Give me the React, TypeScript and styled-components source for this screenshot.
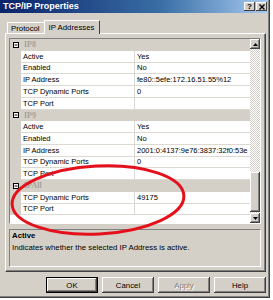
import styled, { createGlobalStyle } from "styled-components";

const GlobalStyle = createGlobalStyle`
  html, body {
    margin: 0;
    padding: 0;
    background: #ffffff;
  }
  body {
    font-family: "Liberation Sans", Arial, sans-serif;
    font-size: 7.5px;
    color: #000;
  }
`;

type Prop = { name: string; value?: string };
type Group = { title: string; props: Prop[] };

const groups: Group[] = [
  {
    title: "IP8",
    props: [
      { name: "Active", value: "Yes" },
      { name: "Enabled", value: "No" },
      { name: "IP Address", value: "fe80::5efe:172.16.51.55%12" },
      { name: "TCP Dynamic Ports", value: "0" },
      { name: "TCP Port", value: "" },
    ],
  },
  {
    title: "IP9",
    props: [
      { name: "Active", value: "Yes" },
      { name: "Enabled", value: "No" },
      { name: "IP Address", value: "2001:0:4137:9e76:3837:32f0:53e" },
      { name: "TCP Dynamic Ports", value: "0" },
      { name: "TCP Port", value: "" },
    ],
  },
  {
    title: "IPAll",
    props: [
      { name: "TCP Dynamic Ports", value: "49175" },
      { name: "TCP Port", value: "" },
    ],
  },
];

const App: React.FC = () => {
  return (
    <>
      <GlobalStyle />
      <Window>
        <TitleBar>
          <Title>TCP/IP Properties</Title>
          <CaptionButtons>
            <CaptionButton>?</CaptionButton>
            <CaptionButton>
              <svg width="6" height="6" viewBox="0 0 6 6">
                <path d="M0.5 0.5 L5.5 5.5 M5.5 0.5 L0.5 5.5" stroke="#000" strokeWidth="1.4" />
              </svg>
            </CaptionButton>
          </CaptionButtons>
        </TitleBar>

        <Body>
          <Tabs>
            <Tab>Protocol</Tab>
            <Tab $active>IP Addresses</Tab>
          </Tabs>
          <TabPanel>
            <Grid>
              <GridContent>
                {groups.map((g) => (
                  <div key={g.title}>
                    <GroupRow>
                      <Expander>
                        <svg width="6" height="6" viewBox="0 0 6 6">
                          <rect x="0.5" y="0.5" width="5" height="5" fill="#fff" stroke="#000" strokeWidth="1" />
                          <path d="M1.5 3 H4.5" stroke="#000" strokeWidth="1" />
                        </svg>
                      </Expander>
                      <GroupTitle>{g.title}</GroupTitle>
                    </GroupRow>
                    {g.props.map((p) => (
                      <PropRow key={p.name}>
                        <Gutter />
                        <NameCell>{p.name}</NameCell>
                        <ValueCell>{p.value}</ValueCell>
                      </PropRow>
                    ))}
                  </div>
                ))}
                <Filler />
              </GridContent>
              <ScrollBar>
                <ScrollButton>
                  <svg width="5" height="3" viewBox="0 0 5 3">
                    <path d="M2.5 0 L5 3 L0 3 Z" fill="#000" />
                  </svg>
                </ScrollButton>
                <Track>
                  <Thumb />
                </Track>
                <ScrollButton>
                  <svg width="5" height="3" viewBox="0 0 5 3">
                    <path d="M0 0 L5 0 L2.5 3 Z" fill="#000" />
                  </svg>
                </ScrollButton>
              </ScrollBar>
            </Grid>
            <Description>
              <DescTitle>Active</DescTitle>
              <DescText>Indicates whether the selected IP Address is active.</DescText>
            </Description>
          </TabPanel>
          <ButtonRow>
            <DialogButton $default>OK</DialogButton>
            <DialogButton>Cancel</DialogButton>
            <DialogButton disabled>Apply</DialogButton>
            <DialogButton>Help</DialogButton>
          </ButtonRow>
        </Body>

        <Annotation width="273" height="300" viewBox="0 0 273 300">
          <ellipse
            cx="98"
            cy="200"
            rx="86"
            ry="34"
            fill="none"
            stroke="#e4111c"
            strokeWidth="3"
            transform="rotate(-3 98 200)"
          />
        </Annotation>
      </Window>
    </>
  );
};

const Window = styled.div`
  position: relative;
  width: 270px;
  height: 298px;
  box-sizing: border-box;
  background: #d4d0c8;
  border-right: 1px solid #404040;
  border-bottom: 1px solid #404040;
  box-shadow: inset -1px -1px 0 #808080;
  display: flex;
  flex-direction: column;
`;

const TitleBar = styled.div`
  height: 13px;
  margin-right: 1px;
  display: flex;
  align-items: center;
  justify-content: space-between;
  background: linear-gradient(to right, #0a246a 0%, #3a6ea5 60%, #a6caf0 100%);
`;

const Title = styled.div`
  color: #fff;
  font-weight: 700;
  font-size: 9px;
  padding-left: 3px;
  line-height: 13px;
`;

const CaptionButtons = styled.div`
  display: flex;
  gap: 1px;
  padding-right: 1px;
`;

const CaptionButton = styled.div`
  width: 11px;
  height: 9px;
  box-sizing: border-box;
  background: #d4d0c8;
  box-shadow: inset -1px -1px #404040, inset 1px 1px #fff;
  display: flex;
  align-items: center;
  justify-content: center;
  font-weight: 700;
  font-size: 8px;
  line-height: 9px;
`;

const Body = styled.div`
  flex: 1;
  display: flex;
  flex-direction: column;
  padding: 7px 3px 0 5px;
`;

const Tabs = styled.div`
  display: flex;
  align-items: flex-end;
  height: 13px;
  padding-left: 2px;
  position: relative;
  z-index: 1;
`;

const Tab = styled.div<{ $active?: boolean }>`
  box-sizing: border-box;
  height: ${(p) => (p.$active ? "14px" : "11px")};
  margin-bottom: ${(p) => (p.$active ? "-1px" : "0")};
  margin-left: ${(p) => (p.$active ? "-1px" : "0")};
  padding: ${(p) => (p.$active ? "2px 5px 0 4px" : "1px 4px 0 3px")};
  background: #d4d0c8;
  border-top: 1px solid #fff;
  border-left: 1px solid #fff;
  border-right: 1px solid #404040;
  border-radius: 1px 1px 0 0;
  font-size: 7.8px;
  line-height: 9px;
  white-space: nowrap;
`;

const TabPanel = styled.div`
  height: 239px;
  box-sizing: border-box;
  border-top: 1px solid #fff;
  border-left: 1px solid #fff;
  border-right: 1px solid #404040;
  border-bottom: 1px solid #404040;
  box-shadow: inset -1px -1px #808080;
  padding: 4px 4px 4px 3px;
  display: flex;
  flex-direction: column;
  gap: 5px;
`;

const Grid = styled.div`
  height: 188px;
  box-sizing: border-box;
  border: 1px solid;
  border-color: #808080 #fff #fff #808080;
  display: flex;
  background: #fff;
`;

const GridContent = styled.div`
  flex: 1;
  display: flex;
  flex-direction: column;
  overflow: hidden;
`;

const GroupRow = styled.div`
  height: 11.75px;
  display: flex;
  align-items: center;
  background: #d4d0c8;
`;

const Expander = styled.div`
  width: 11px;
  display: flex;
  align-items: center;
  justify-content: center;
  padding-left: 1px;
  box-sizing: border-box;
`;

const GroupTitle = styled.div`
  font-family: "Liberation Serif", "Times New Roman", serif;
  font-weight: 700;
  font-size: 8px;
  color: #a6a29a;
  padding-left: 3px;
`;

const PropRow = styled.div`
  height: 11.75px;
  display: grid;
  grid-template-columns: 11px 114px 1fr;
`;

const Gutter = styled.div`
  background: #d4d0c8;
`;

const NameCell = styled.div`
  border-bottom: 1px solid #dcd9d2;
  border-right: 1px solid #dcd9d2;
  padding-left: 2px;
  display: flex;
  align-items: center;
  white-space: nowrap;
  overflow: hidden;
`;

const ValueCell = styled.div`
  border-bottom: 1px solid #dcd9d2;
  padding-left: 2px;
  display: flex;
  align-items: center;
  white-space: nowrap;
  overflow: hidden;
`;

const Filler = styled.div`
  flex: 1;
  background: #fff;
`;

const ScrollBar = styled.div`
  width: 10px;
  display: flex;
  flex-direction: column;
`;

const ScrollButton = styled.div`
  height: 10px;
  box-sizing: border-box;
  background: #d4d0c8;
  box-shadow: inset -1px -1px #404040, inset 1px 1px #fff, inset -2px -2px #808080;
  display: flex;
  align-items: center;
  justify-content: center;
`;

const Track = styled.div`
  flex: 1;
  display: flex;
  flex-direction: column;
  justify-content: flex-end;
  background: repeating-conic-gradient(#d4d0c8 0 25%, #ffffff 0 50%) 0 0 / 2px 2px;
`;

const Thumb = styled.div`
  height: 40px;
  margin-bottom: 1px;
  background: #d4d0c8;
  box-shadow: inset -1px -1px #404040, inset 1px 1px #fff, inset -2px -2px #808080;
`;

const Description = styled.div`
  height: 38px;
  box-sizing: border-box;
  border: 1px solid;
  border-color: #808080 #fff #fff #808080;
  padding: 1px 2px;
`;

const DescTitle = styled.div`
  font-weight: 700;
  font-size: 7.8px;
  line-height: 10px;
`;

const DescText = styled.div`
  font-size: 7.8px;
  line-height: 10px;
  margin-top: 2px;
`;

const ButtonRow = styled.div`
  display: flex;
  justify-content: flex-end;
  gap: 4px;
  margin-top: 5px;
`;

const DialogButton = styled.button<{ $default?: boolean }>`
  width: 52px;
  height: 16px;
  padding: 0;
  box-sizing: border-box;
  font-family: "Liberation Sans", Arial, sans-serif;
  font-size: 7.8px;
  color: #000;
  background: #d4d0c8;
  border: ${(p) => (p.$default ? "1px solid #000" : "none")};
  border-radius: 0;
  box-shadow: inset -1px -1px #404040, inset 1px 1px #fff, inset -2px -2px #808080;

  &:disabled {
    color: #808080;
    text-shadow: 1px 1px #fff;
  }
`;

const Annotation = styled.svg`
  position: absolute;
  left: 0;
  top: 0;
  pointer-events: none;
`;

export default App;
